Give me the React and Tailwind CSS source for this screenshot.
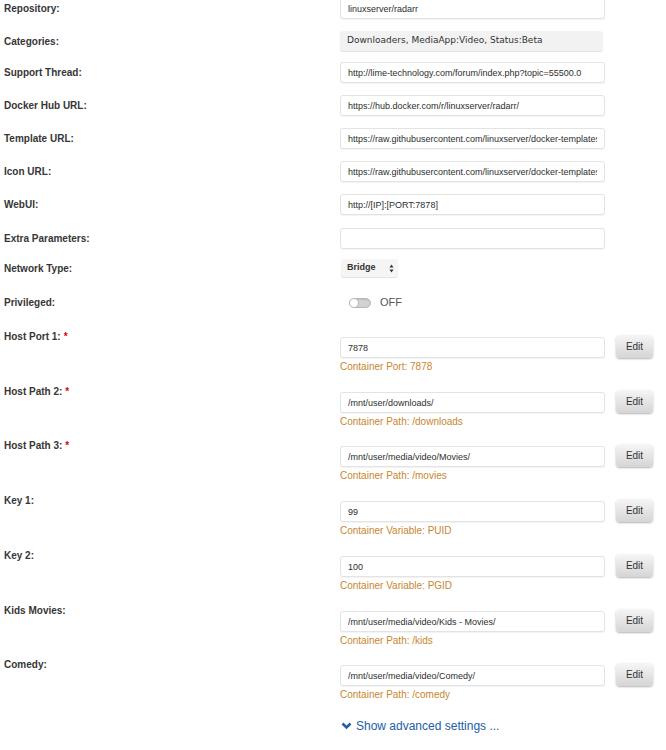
import React from 'react';

const basicRows = [
  { label: 'Support Thread:', value: 'http://lime-technology.com/forum/index.php?topic=55500.0', h: 'h-[33px]' },
  { label: 'Docker Hub URL:', value: 'https://hub.docker.com/r/linuxserver/radarr/', h: 'h-[33px]' },
  { label: 'Template URL:', value: 'https://raw.githubusercontent.com/linuxserver/docker-templates/master/linuxserver.io/radarr.xml', h: 'h-[33px]' },
  { label: 'Icon URL:', value: 'https://raw.githubusercontent.com/linuxserver/docker-templates/master/linuxserver.io/img/radarr-icon.png', h: 'h-[33px]' },
  { label: 'WebUI:', value: 'http://[IP]:[PORT:7878]', h: 'h-[34px]' },
  { label: 'Extra Parameters:', value: '', h: 'h-[31px]' },
];

const configRows = [
  { label: 'Host Port 1:', req: true, value: '7878', note: 'Container Port: 7878', h: 'h-[55px]' },
  { label: 'Host Path 2:', req: true, value: '/mnt/user/downloads/', note: 'Container Path: /downloads', h: 'h-[54px]' },
  { label: 'Host Path 3:', req: true, value: '/mnt/user/media/video/Movies/', note: 'Container Path: /movies', h: 'h-[55px]' },
  { label: 'Key 1:', value: '99', note: 'Container Variable: PUID', h: 'h-[55px]' },
  { label: 'Key 2:', value: '100', note: 'Container Variable: PGID', h: 'h-[55px]' },
  { label: 'Kids Movies:', value: '/mnt/user/media/video/Kids - Movies/', note: 'Container Path: /kids', h: 'h-[54px]' },
  { label: 'Comedy:', value: '/mnt/user/media/video/Comedy/', note: 'Container Path: /comedy', h: 'h-[55px]' },
];

const Label = ({ children, req }) => (
  <div className="w-[340px] shrink-0 pl-[4px] text-[10px] font-bold text-[#363636]">
    {children}
    {req && <span className="text-[#e00000] ml-[3px]">*</span>}
  </div>
);

const TextBox = ({ value }) => (
  <input
    readOnly
    defaultValue={value}
    className="w-[265px] h-[21px] rounded-[3px] border border-[#e3e3e3] bg-white px-[7px] text-[9px] text-[#2e2e2e] shadow-[0_1px_1px_rgba(0,0,0,0.05)] outline-none overflow-hidden whitespace-nowrap"
    style={{ fontFamily: '"Liberation Sans", Arial, sans-serif' }}
  />
);

const App = () => {
  return (
    <div className="w-[666px] h-[750px] bg-white overflow-hidden" style={{ fontFamily: '"Liberation Sans", Arial, sans-serif' }}>
      <div className="mt-[-2px] flex flex-col">
        <div className="flex items-start h-[33px]">
          <div className="h-[21px] flex items-center"><Label>Repository:</Label></div>
          <TextBox value="linuxserver/radarr" />
        </div>

        <div className="flex items-start h-[31px]">
          <div className="h-[21px] flex items-center"><Label>Categories:</Label></div>
          <div
            className="w-[263px] h-[20px] flex items-center rounded-[3px] bg-[#f2f2f2] px-[7px] text-[9px] text-[#333] shadow-[0_1px_1px_rgba(0,0,0,0.12)]"
            style={{ fontFamily: '"DejaVu Sans", Verdana, sans-serif' }}
          >
            Downloaders, MediaApp:Video, Status:Beta
          </div>
        </div>

        {basicRows.map((r) => (
          <div key={r.label} className={`flex items-start ${r.h}`}>
            <div className="h-[21px] flex items-center"><Label>{r.label}</Label></div>
            <TextBox value={r.value} />
          </div>
        ))}

        <div className="flex items-start h-[33px]">
          <div className="h-[18px] flex items-center"><Label>Network Type:</Label></div>
          <div className="ml-[1px] w-[57px] h-[18px] flex items-center justify-between rounded-[3px] bg-[#f5f5f5] pl-[6px] pr-[4px] shadow-[0_1px_1px_rgba(0,0,0,0.12)]">
            <span className="text-[9px] font-bold text-[#333]">Bridge</span>
            <svg width="5" height="9" viewBox="0 0 5 9">
              <path d="M2.5 0.5 L4.5 3.5 L0.5 3.5 Z" fill="#333" />
              <path d="M2.5 8.5 L4.5 5.5 L0.5 5.5 Z" fill="#333" />
            </svg>
          </div>
        </div>

        <div className="flex items-start h-[37px]">
          <div className="h-[21px] flex items-center"><Label>Privileged:</Label></div>
          <div className="h-[21px] flex items-center ml-[9px]">
            <div className="w-[22px] h-[10px] rounded-full border border-[#b8b8b8] bg-[#d2d2d2] flex items-center shadow-[inset_0_1px_1px_rgba(0,0,0,0.1)]">
              <div className="w-[10px] h-[10px] -ml-[1px] rounded-full bg-white border border-[#b8b8b8]" />
            </div>
            <span className="ml-[9px] text-[11px] text-[#555]">OFF</span>
          </div>
        </div>

        {configRows.map((r) => (
          <div key={r.label} className={`flex items-start ${r.h}`}>
            <div className="h-[12px] flex items-center mt-[1px]"><Label req={r.req}>{r.label}</Label></div>
            <div className="mt-[8px] flex flex-col">
              <TextBox value={r.value} />
              <div className="mt-[3px] text-[10px] leading-[12px] text-[#c8862e]">{r.note}</div>
            </div>
            <button className="mt-[6px] ml-[11px] w-[37px] h-[23px] rounded-[4px] bg-gradient-to-b from-[#f6f6f6] to-[#d5d5d5] text-[10px] text-[#333] shadow-[0_1px_2px_rgba(0,0,0,0.3)]">
              Edit
            </button>
          </div>
        ))}

        <div className="flex items-center h-[28px] pl-[341px] text-[12px] text-[#2160a8]">
          <svg width="11" height="8" viewBox="0 0 11 8" className="mr-[4px]">
            <path d="M1.5 1.5 L5.5 5.5 L9.5 1.5" fill="none" stroke="#2160a8" strokeWidth="2.6" />
          </svg>
          Show advanced settings ...
        </div>
      </div>
    </div>
  );
};

export default App;
